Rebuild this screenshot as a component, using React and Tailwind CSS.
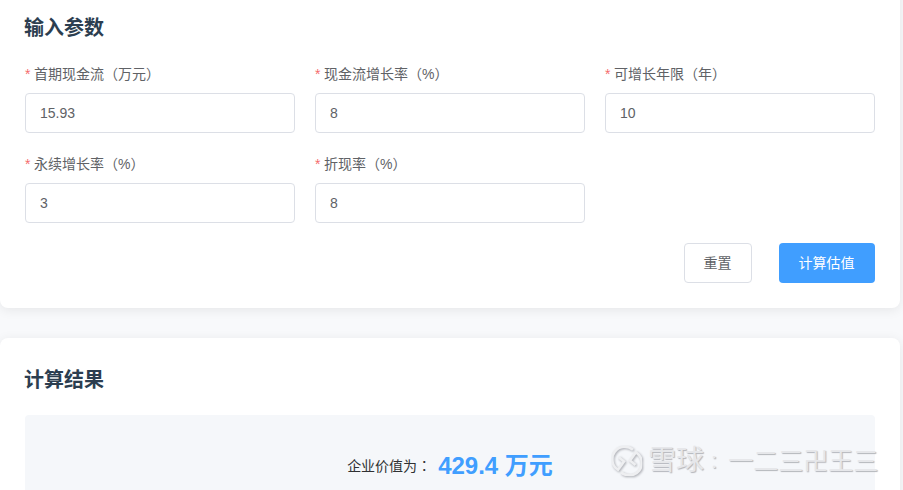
const FONT = "font-['Liberation_Sans','Noto_Sans_CJK_SC',sans-serif]";

function Field({ label, value }) {
  return (
    <div>
      <div className="flex h-[20px] items-center text-[14px] leading-[20px] text-[#606266]">
        <span className="mr-[3.5px] text-[#f56c6c]">*</span>
        {label}
      </div>
      <div className="mt-[9px] flex h-[40px] items-center rounded-[4px] border border-[#dcdfe6] bg-white px-[14px] text-[14px] text-[#606266]">
        {value}
      </div>
    </div>
  );
}

function Watermark() {
  return (
    <div className="absolute left-[612px] top-[446px] flex items-center text-[#e6e7ea] [text-shadow:1px_1px_1px_#b4b6bb]">
      <svg width="30" height="30" viewBox="0 0 30 30" fill="none" stroke="#eeeff1" strokeWidth="2.6" className="drop-shadow-[1px_1px_1px_#a8aab0]">
        <path d="M21 3.8 A12.5 12.5 0 1 0 6 23.7 L12 15.5 L6.5 11" />
        <path d="M9 26.2 A12.5 12.5 0 1 0 24 6.3 L18 14.5 L23.5 19" />
      </svg>
      <span className="ml-[6px] text-[28px] leading-[30px]">雪球</span>
      <span className="ml-[7px] text-[22px] leading-[30px]">:</span>
      <span className="ml-[11px] text-[25px] leading-[30px]">一二三卍王三</span>
    </div>
  );
}

export default function App() {
  return (
    <div className={`relative h-[490px] w-[903px] overflow-hidden bg-[#f8f9fb] ${FONT}`}>
      <div className="-mt-[20px] w-[900px]">
        <section className="h-[328px] rounded-[8px] bg-white pl-[24px] pt-[36px] shadow-[0_2px_12px_rgba(0,0,0,0.08)]">
          <h2 className="text-[20px] leading-[24px] font-bold text-[#2c3e50]">输入参数</h2>
          <div className="mt-[24px] ml-[1px] grid w-[850px] grid-cols-3 gap-x-[20px] gap-y-[21px]">
            <Field label="首期现金流（万元）" value="15.93" />
            <Field label="现金流增长率（%）" value="8" />
            <Field label="可增长年限（年）" value="10" />
            <Field label="永续增长率（%）" value="3" />
            <Field label="折现率（%）" value="8" />
          </div>
          <div className="mt-[20px] ml-[1px] flex w-[850px] justify-end gap-[27px]">
            <button className="h-[40px] w-[68px] rounded-[4px] border border-[#dcdfe6] bg-white pr-[1px] text-[14px] text-[#606266]">重置</button>
            <button className="h-[40px] w-[96px] rounded-[4px] bg-[#409eff] pr-[1px] text-[14px] text-white">计算估值</button>
          </div>
        </section>
        <section className="mt-[30px] h-[200px] rounded-[8px] bg-white pl-[24px] pt-[30px] shadow-[0_2px_12px_rgba(0,0,0,0.08)]">
          <h2 className="text-[20px] leading-[24px] font-bold text-[#2c3e50]">计算结果</h2>
          <div className="mt-[23px] ml-[1px] flex h-[130px] w-[850px] justify-center rounded-[4px] bg-[#f5f7fa] pt-[36px]">
            <div className="flex h-[30px] items-center">
              <span className="text-[14px] text-[#303133]">
                企业价值为<span className="font-['Noto_Sans_CJK_TC',sans-serif]">：</span>
              </span>
              <span className="ml-[7px] text-[24px] font-bold text-[#409eff]">429.4 万元</span>
            </div>
          </div>
        </section>
      </div>
      <Watermark />
    </div>
  );
}
